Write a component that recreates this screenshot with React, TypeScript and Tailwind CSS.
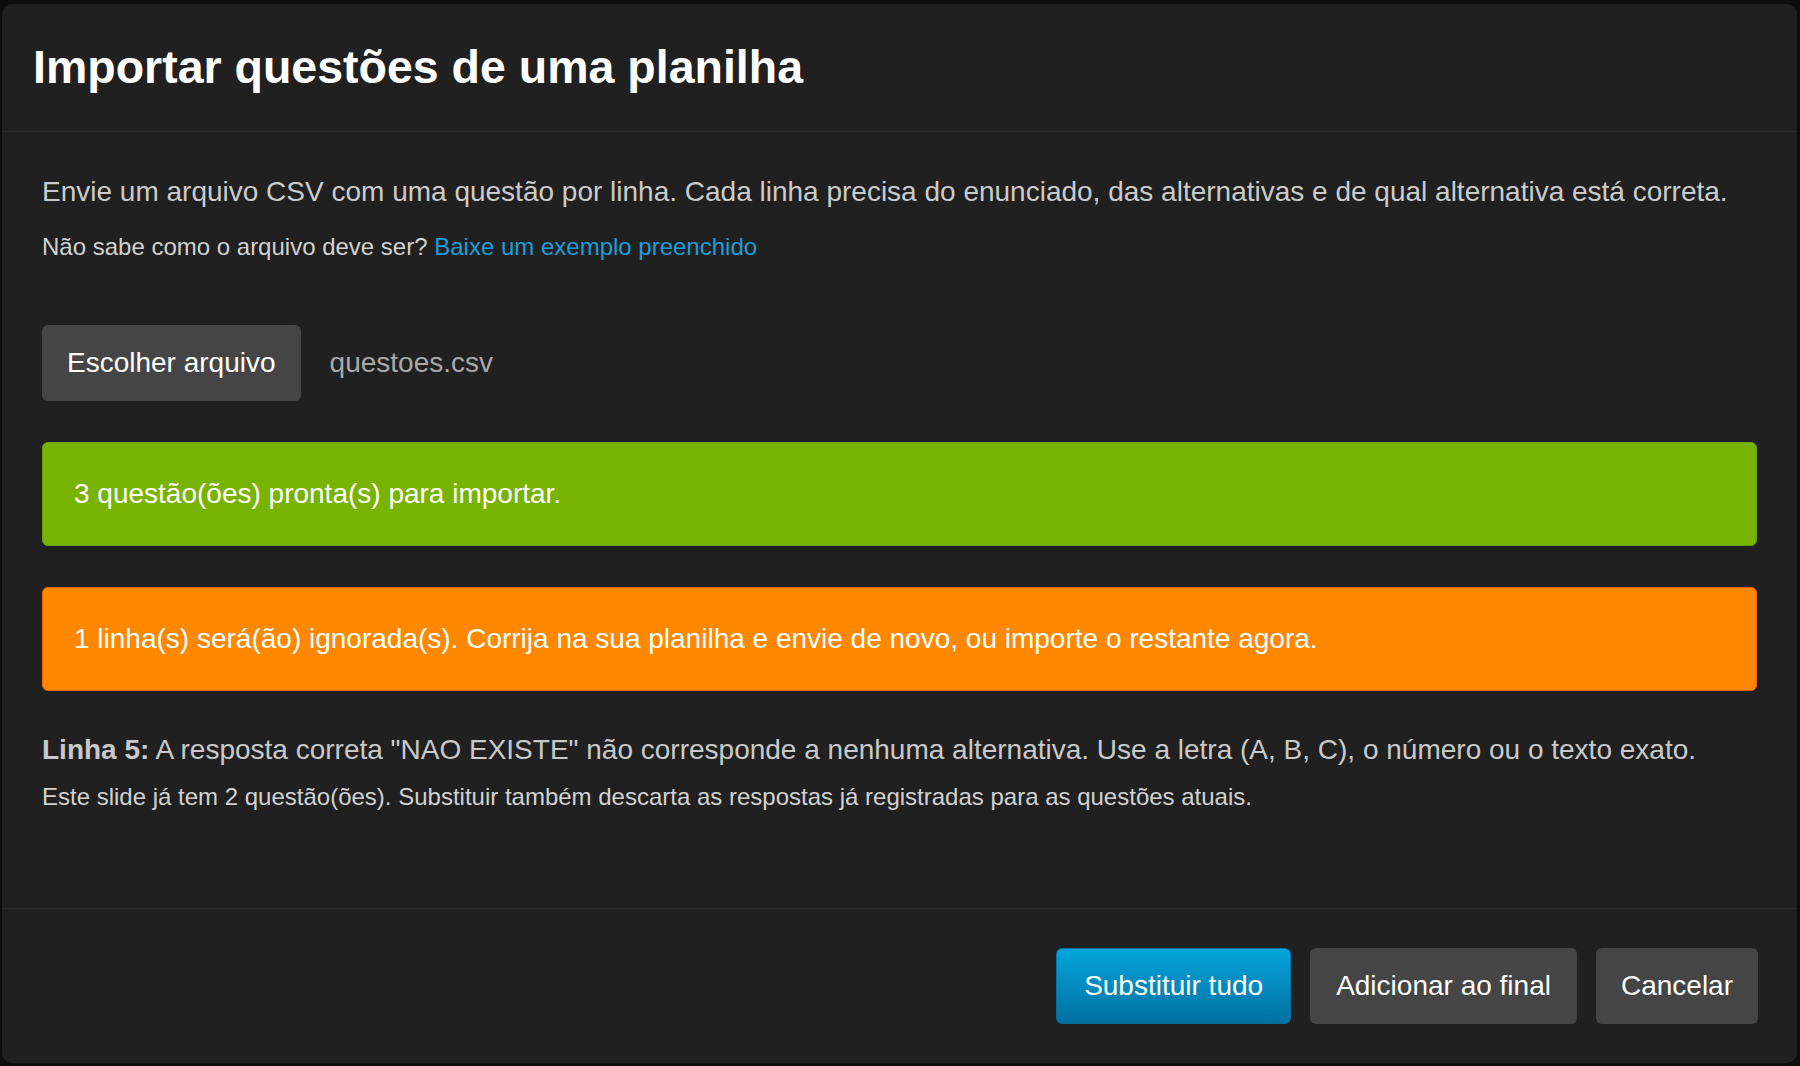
const font = { fontFamily: '"Liberation Sans", Arial, sans-serif' };

const ImportDialog = () => {
  return (
    <div className="w-[1800px] h-[1066px] bg-[#0d0d0d] pt-[4px] pl-[2px] overflow-hidden" style={font}>
      <div className="w-[1795px] h-[1059px] rounded-[10px] bg-[#202020] flex flex-col">
        <div className="h-[128px] border-b border-[#2b2b2b] flex items-center pl-[31px]">
          <h1 className="text-[46.5px] font-bold text-white leading-none">Importar questões de uma planilha</h1>
        </div>

        <div className="flex-1 pt-[42px] px-[40px]">
          <p className="text-[28px] leading-[36px] text-[#cbcbcb]">
            Envie um arquivo CSV com uma questão por linha. Cada linha precisa do enunciado, das alternativas e de qual alternativa está correta.
          </p>
          <p className="mt-[21px] text-[24px] leading-[32px] text-[#d2d2d2]">
            Não sabe como o arquivo deve ser? <a className="text-[#1b9dd9]">Baixe um exemplo preenchido</a>
          </p>

          <div className="mt-[62px] flex items-center gap-[29px]">
            <button className="h-[76px] px-[25px] rounded-[6px] bg-[#454545] text-white text-[28px]">Escolher arquivo</button>
            <span className="text-[28px] text-[#a9a9a9]">questoes.csv</span>
          </div>

          <div className="mt-[41px] rounded-[6px] border border-[#6c9f00] bg-[#77b300] px-[31px] py-[33px] text-[28px] leading-[36px] text-white">
            3 questão(ões) pronta(s) para importar.
          </div>

          <div className="mt-[41px] rounded-[6px] border border-[#f26400] bg-[#ff8800] px-[31px] py-[33px] text-[28px] leading-[36px] text-white">
            1 linha(s) será(ão) ignorada(s). Corrija na sua planilha e envie de novo, ou importe o restante agora.
          </div>

          <p className="mt-[41px] text-[28px] leading-[36px] text-[#c9c9c9]">
            <strong className="font-bold">Linha 5:</strong> A resposta correta "NAO EXISTE" não corresponde a nenhuma alternativa. Use a letra (A, B, C), o número ou o texto exato.
          </p>
          <p className="mt-[13px] text-[24px] leading-[32px] text-[#d2d2d2]">
            Este slide já tem 2 questão(ões). Substituir também descarta as respostas já registradas para as questões atuais.
          </p>
        </div>

        <div className="h-[155px] border-t border-[#2b2b2b] flex items-center justify-end gap-[19px] pr-[39px]">
          <button className="h-[76px] px-[27px] rounded-[6px] border border-[#05719f] bg-gradient-to-b from-[#05a5dc] to-[#0270a1] text-white text-[28px]">
            Substituir tudo
          </button>
          <button className="h-[76px] px-[26px] rounded-[6px] bg-[#454545] text-white text-[28px]">Adicionar ao final</button>
          <button className="h-[76px] px-[25px] rounded-[6px] bg-[#454545] text-white text-[28px]">Cancelar</button>
        </div>
      </div>
    </div>
  );
};

export default function App() {
  return <ImportDialog />;
}
